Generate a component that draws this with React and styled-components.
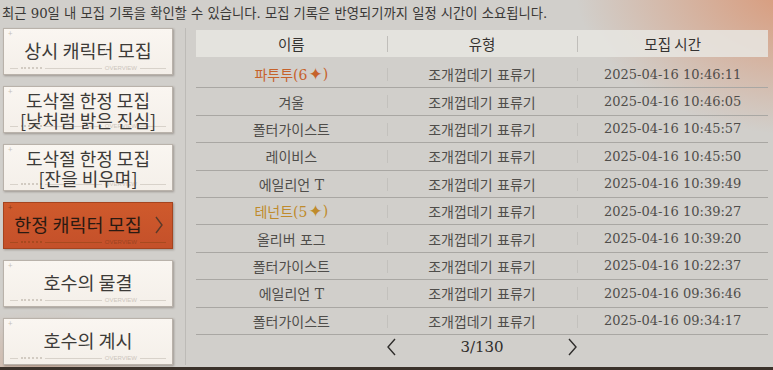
import styled, { createGlobalStyle } from 'styled-components';

const GlobalStyle = createGlobalStyle`
    html, body {
        margin: 0;
        padding: 0;
    }
    body {
        width: 773px;
        height: 370px;
        overflow: hidden;
        font-family: "DejaVu Serif", "Noto Sans CJK KR", serif;
    }
`

const Page = styled.div`
    position: relative;
    width: 773px;
    height: 370px;
    box-sizing: border-box;
    border-bottom: 3px solid #3b322b;
    background:
        radial-gradient(ellipse 230px 150px at 805px -15px, rgba(218, 146, 110, 0.95), rgba(218, 146, 110, 0) 100%),
        radial-gradient(ellipse 120px 60px at 40px 370px, rgba(205, 150, 120, 0.45), rgba(205, 150, 120, 0) 100%),
        #d1cfcb;
    display: flex;
    flex-direction: column;
`

const Notice = styled.p`
    margin: 0;
    height: 29px;
    line-height: 28px;
    padding-left: 2px;
    font-size: 13.3px;
    color: #3a3836;
`

const Main = styled.div`
    display: flex;
    flex: 1;
`

const Sidebar = styled.div`
    width: 182px;
    padding-left: 3px;
    display: flex;
    flex-direction: column;
    gap: 11px;
    border-right: 1px solid #bdbbb7;
    margin-bottom: 13px;
`

const TabButton = styled.div`
    position: relative;
    width: 170px;
    height: 47px;
    box-sizing: border-box;
    border: 1px solid ${p => p.$active ? '#a5441f' : '#b9b2aa'};
    background: ${p => p.$active
        ? 'linear-gradient(180deg, #cf5a2c, #c4502a)'
        : 'linear-gradient(180deg, #faf6f1, #f4efe9)'};
    box-shadow: 1px 1px 2px rgba(60, 50, 40, 0.35);
    display: flex;
    align-items: center;
    justify-content: center;
    padding-bottom: ${p => p.$two ? '0' : '3px'};
    padding-right: ${p => p.$active ? '20px' : '0'};
    color: ${p => p.$active ? '#2a1a12' : '#3d3b38'};
    font-size: ${p => p.$two ? '18px' : '18.5px'};
    line-height: ${p => p.$two ? '20px' : '22px'};
    text-align: center;
    font-family: "Noto Sans CJK KR", sans-serif;
`

const Label = styled.div`
    position: relative;
`

const Corner = styled.span`
    position: absolute;
    top: 0;
    left: 4px;
    font-size: 8px;
    line-height: 8px;
    color: ${p => p.$active ? '#8e3a1a' : '#c7c0b8'};
`

const Deco = styled.div`
    position: absolute;
    left: 6px;
    right: 6px;
    bottom: 3px;
    display: flex;
    align-items: center;
    gap: 3px;
    font-family: "Liberation Sans", sans-serif;
    font-size: 6px;
    line-height: 6px;
    color: ${p => p.$active ? '#9c4320' : '#cdc6bd'};
`

const DecoLine = styled.span`
    flex: ${p => p.$grow || 1};
    height: ${p => p.$dotted ? '0' : '1px'};
    background: ${p => p.$dotted ? 'none' : (p.$active ? '#a8491f' : '#d8d2ca')};
    border-top: ${p => p.$dotted ? `2px dotted ${p.$active ? '#a8491f' : '#d2cbc2'}` : 'none'};
`

const Chevron = styled.svg`
    position: absolute;
    right: 8px;
    top: 13px;
`

const TableArea = styled.div`
    flex: 1;
    padding: 2px 5px 0 10px;
    display: flex;
    flex-direction: column;
`

const Header = styled.div`
    display: grid;
    grid-template-columns: 1fr 1fr 1fr;
    height: 27px;
    background: rgba(232, 230, 226, 0.85);
    margin-bottom: 4px;
`

const HeadCell = styled.div`
    display: flex;
    align-items: center;
    justify-content: center;
    font-family: "Noto Sans CJK KR", sans-serif;
    font-size: 14.5px;
    color: #353331;
    position: relative;
    &::before {
        content: '';
        display: ${p => p.$first ? 'none' : 'block'};
        position: absolute;
        left: 0;
        top: 6px;
        height: 16px;
        width: 1px;
        background: #c0beba;
    }
`

const Row = styled.div`
    display: grid;
    grid-template-columns: 1fr 1fr 1fr;
    height: 27.4px;
    box-sizing: border-box;
    border-bottom: 1px solid #a9a7a3;
`

const Cell = styled.div`
    display: flex;
    align-items: center;
    justify-content: center;
    font-size: ${p => p.$time ? '13px' : '14px'};
    color: ${p => p.$color || '#4f4d4a'};
    position: relative;
    &::before {
        content: '';
        display: ${p => p.$first ? 'none' : 'block'};
        position: absolute;
        left: 0;
        top: 7px;
        height: 13px;
        width: 1px;
        background: #c3c1bd;
    }
`

const Star = styled.span`
    font-family: "DejaVu Sans", sans-serif;
    font-size: 17px;
    line-height: 14px;
    margin: 0 0 0 1px;
`

const Pager = styled.div`
    display: flex;
    align-items: center;
    height: 26px;
    padding-left: 189px;
    margin-top: -1px;
`

const PageText = styled.span`
    width: 166px;
    text-align: center;
    font-size: 15px;
    color: #2f2d2b;
`

const tabs = [
    { lines: ['상시 캐릭터 모집'] },
    { lines: ['도삭절 한정 모집', '[낮처럼 밝은 진심]'] },
    { lines: ['도삭절 한정 모집', '[잔을 비우며]'] },
    { lines: ['한정 캐릭터 모집'], active: true },
    { lines: ['호수의 물결'] },
    { lines: ['호수의 계시'] },
]

const rows = [
    { name: '파투투(6', star: true, color: '#c6622b', time: '2025-04-16 10:46:11' },
    { name: '겨울', time: '2025-04-16 10:46:05' },
    { name: '폴터가이스트', time: '2025-04-16 10:45:57' },
    { name: '레이비스', time: '2025-04-16 10:45:50' },
    { name: '에일리언 T', time: '2025-04-16 10:39:49' },
    { name: '테넌트(5', star: true, color: '#bf8b2c', time: '2025-04-16 10:39:27' },
    { name: '올리버 포그', time: '2025-04-16 10:39:20' },
    { name: '폴터가이스트', time: '2025-04-16 10:22:37' },
    { name: '에일리언 T', time: '2025-04-16 09:36:46' },
    { name: '폴터가이스트', time: '2025-04-16 09:34:17' },
]

const Arrow = ({ dir }) => (
    <svg width="14" height="20" viewBox="0 0 14 20">
        <path
            d={dir === 'left' ? 'M10 2 L3 10 L10 18' : 'M4 2 L11 10 L4 18'}
            fill="none"
            stroke="#2f2d2b"
            strokeWidth="1.4"
        />
    </svg>
)

const App = () => {
    return (
        <>
            <GlobalStyle />
            <Page>
                <Notice>최근 90일 내 모집 기록을 확인할 수 있습니다. 모집 기록은 반영되기까지 일정 시간이 소요됩니다.</Notice>
                <Main>
                    <Sidebar>
                        {tabs.map((t, i) => (
                            <TabButton key={i} $active={t.active} $two={t.lines.length > 1}>
                                <Corner $active={t.active}>+</Corner>
                                <Deco $active={t.active}>
                                    <DecoLine $active={t.active} $grow={0.3} />
                                    <DecoLine $active={t.active} $grow={0.8} $dotted />
                                    <DecoLine $active={t.active} $grow={2.2} />
                                    <span>OVERVIEW</span>
                                    <DecoLine $active={t.active} />
                                </Deco>
                                <Label>
                                    {t.lines.map((l, j) => <div key={j}>{l}</div>)}
                                </Label>
                                {t.active && (
                                    <Chevron width="10" height="18" viewBox="0 0 10 18">
                                        <path d="M2 1 L8 9 L2 17" fill="none" stroke="#5a3a2a" strokeWidth="1.4" />
                                    </Chevron>
                                )}
                            </TabButton>
                        ))}
                    </Sidebar>
                    <TableArea>
                        <Header>
                            <HeadCell $first>이름</HeadCell>
                            <HeadCell>유형</HeadCell>
                            <HeadCell>모집 시간</HeadCell>
                        </Header>
                        {rows.map((r, i) => (
                            <Row key={i}>
                                <Cell $first $color={r.color}>
                                    {r.name}
                                    {r.star && <><Star>✦</Star>)</>}
                                </Cell>
                                <Cell>조개껍데기 표류기</Cell>
                                <Cell $time>{r.time}</Cell>
                            </Row>
                        ))}
                        <Pager>
                            <Arrow dir="left" />
                            <PageText>3/130</PageText>
                            <Arrow dir="right" />
                        </Pager>
                    </TableArea>
                </Main>
            </Page>
        </>
    )
}

export default App
